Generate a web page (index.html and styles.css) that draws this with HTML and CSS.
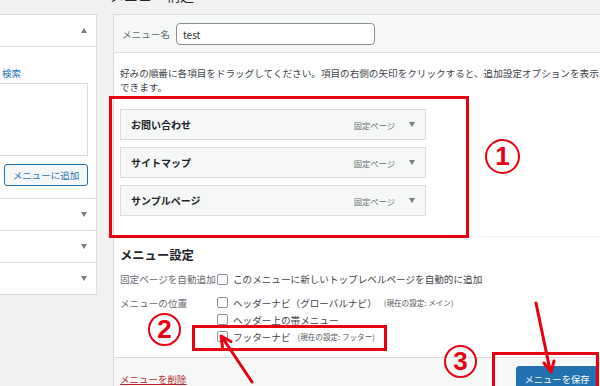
FILE: index.html
```html
<!DOCTYPE html>
<html lang="ja">
<head>
  <meta charset="utf-8">
  <title>メニュー構造</title>
  <link rel="stylesheet" href="styles.css">
</head>
<body>
  <div class="page">
    <div class="side">
      <div class="box">
        <div class="box-head"><span class="tri up"></span></div>
        <div class="box-body">
          <div class="tabs"><a href="#">検索</a></div>
          <div class="list"></div>
          <div class="add-row"><button type="button" class="btn">メニューに追加</button></div>
        </div>
        <div class="acc-row"><span class="tri"></span></div>
        <div class="acc-row"><span class="tri"></span></div>
        <div class="acc-row"><span class="tri"></span></div>
      </div>
    </div>

    <div class="main">
      <h2 class="title">メニュー構造</h2>
      <div class="menu-box">
        <div class="menu-head">
          <label for="menuName">メニュー名</label>
          <input type="text" id="menuName" value="test">
        </div>
        <div class="menu-body">
          <div class="structure">
            <p class="desc">好みの順番に各項目をドラッグしてください。項目の右側の矢印をクリックすると、追加設定オプションを表示<br>できます。</p>
            <ul class="items">
              <li class="item"><span class="item-title">お問い合わせ</span><span class="item-type">固定ページ</span><span class="tri"></span></li>
              <li class="item"><span class="item-title">サイトマップ</span><span class="item-type">固定ページ</span><span class="tri"></span></li>
              <li class="item"><span class="item-title">サンプルページ</span><span class="item-type">固定ページ</span><span class="tri"></span></li>
            </ul>
          </div>
          <div class="settings">
            <h3>メニュー設定</h3>
            <div class="set-row">
              <div class="set-label">固定ページを自動追加</div>
              <div class="set-opts">
                <label class="opt"><input type="checkbox">このメニューに新しいトップレベルページを自動的に追加</label>
              </div>
            </div>
            <div class="set-row loc">
              <div class="set-label">メニューの位置</div>
              <div class="set-opts">
                <label class="opt"><input type="checkbox">ヘッダーナビ（グローバルナビ）<span class="note">(現在の設定: メイン)</span></label>
                <label class="opt"><input type="checkbox">ヘッダー上の帯メニュー</label>
                <label class="opt"><input type="checkbox">フッターナビ<span class="note">(現在の設定: フッター)</span></label>
              </div>
            </div>
          </div>
        </div>
        <div class="menu-foot">
          <a href="#" class="delete">メニューを削除</a>
          <button type="button" class="btn-primary">メニューを保存</button>
        </div>
      </div>
    </div>
  </div>

  <!-- annotations -->
  <div class="mark box1"></div>
  <div class="mark box2"></div>
  <div class="mark box3"></div>
  <div class="num n1">1</div>
  <div class="num n2">2</div>
  <div class="num n3">3</div>
  <svg class="arrows" width="600" height="386" viewBox="0 0 600 386">
    <g fill="none" stroke="#e60012" stroke-width="3" stroke-linecap="round" stroke-linejoin="round">
      <line x1="252" y1="382" x2="222" y2="337"/>
      <polyline points="231,341.5 221,336 222.5,347"/>
      <line x1="536" y1="303" x2="550" y2="370"/>
      <polyline points="554,361 551,372 544,363"/>
    </g>
  </svg>
</body>
</html>
```

FILE: styles.css
```css
body {
  margin: 0;
  background: #f1f1f1;
  font-family: "Noto Sans CJK JP", sans-serif;
  color: #3c434a;
  overflow: hidden;
  width: 600px;
  height: 386px;
}

.page {
  display: flex;
  align-items: flex-start;
}

.side {
  flex-shrink: 0;
  width: 97px;
  margin-top: 14px;
}

.box {
  width: 110px;
  margin-left: -13px;
  background: #fff;
  border: 1px solid #dcdcde;
  box-sizing: border-box;
}

.box-head {
  height: 31px;
  border-bottom: 1px solid #dcdcde;
  display: flex;
  align-items: center;
  justify-content: flex-end;
  padding-right: 9px;
}

.box-body {
  padding: 19px 8px 12px 12px;
}

.tabs {
  font-size: 9.5px;
  line-height: 14px;
  padding-left: 2px;
}

.tabs a {
  color: #2271b1;
  text-decoration: none;
}

.list {
  height: 71px;
  margin-top: 3px;
  margin-left: -2px;
  border: 1px solid #dcdcde;
}

.add-row {
  display: flex;
  justify-content: flex-end;
  margin-top: 8px;
}

.btn {
  height: 22px;
  width: 84px;
  padding: 0;
  font-family: inherit;
  font-size: 9.5px;
  color: #2271b1;
  background: #f6f7f7;
  border: 1px solid #2271b1;
  border-radius: 3px;
}

.acc-row {
  height: 31px;
  border-top: 1px solid #dcdcde;
  display: flex;
  align-items: center;
  justify-content: flex-end;
  padding-right: 9px;
}

.tri {
  width: 0;
  height: 0;
  border-left: 3.5px solid transparent;
  border-right: 3.5px solid transparent;
  border-top: 5px solid #787c82;
}

.tri.up {
  border-top: none;
  border-bottom: 5px solid #787c82;
}

.main {
  flex-shrink: 0;
  width: 497px;
  margin-left: 16px;
}

.title {
  margin: -12px 0 12px -3px;
  font-size: 14px;
  line-height: 14px;
  font-weight: normal;
  color: #1d2327;
}

.menu-box {
  background: #fff;
  border: 1px solid #dcdcde;
}

.menu-head {
  display: flex;
  align-items: center;
  gap: 6px;
  padding: 8px 8px 7px;
  background: #f6f7f7;
  border-bottom: 1px solid #dcdcde;
}

.menu-head label {
  width: 48px;
  font-size: 9.6px;
  color: #646970;
}

.menu-head input {
  width: 199px;
  height: 22px;
  box-sizing: border-box;
  margin: 0;
  padding: 0 6px;
  font-family: inherit;
  font-size: 10px;
  color: #2c3338;
  border: 1px solid #8c8f94;
  border-radius: 4px;
}

.structure {
  padding: 13px 6px 20px;
}

.desc {
  margin: 0;
  font-size: 9.6px;
  line-height: 14px;
  white-space: nowrap;
}

.items {
  list-style: none;
  margin: 15px 0 0;
  padding: 0;
  width: 306px;
  display: flex;
  flex-direction: column;
  gap: 7px;
}

.item {
  height: 29px;
  display: flex;
  align-items: center;
  padding: 0 10px;
  background: #f6f7f7;
  border: 1px solid #dcdcde;
}

.item-title {
  flex: 1;
  font-size: 10px;
  font-weight: bold;
  color: #1d2327;
}

.item-type {
  font-size: 8.3px;
  color: #646970;
  margin-right: 14px;
}

.settings {
  border-top: 1px solid #f0f0f1;
  padding: 10px 6px 12px;
}

.settings h3 {
  margin: 0 0 9px;
  font-size: 12.3px;
  line-height: 16px;
  font-weight: bold;
  color: #1d2327;
}

.set-row {
  display: grid;
  grid-template-columns: 97px 1fr;
  font-size: 9.6px;
}

.set-row.loc {
  margin-top: 8px;
}

.set-label {
  line-height: 14px;
  color: #646970;
  white-space: nowrap;
}

.loc .set-label {
  margin-top: 2px;
}

.set-opts {
  display: flex;
  flex-direction: column;
}

.opt {
  display: flex;
  align-items: center;
  gap: 5px;
  line-height: 14px;
  white-space: nowrap;
}

.loc .opt {
  height: 17px;
}

.opt input {
  appearance: none;
  margin: 0;
  width: 11px;
  height: 11px;
  border: 1px solid #8c8f94;
  border-radius: 2px;
  background: #fff;
  flex-shrink: 0;
}

.note {
  font-size: 7.6px;
  color: #50575e;
  margin-left: 2px;
}

.menu-foot {
  display: flex;
  align-items: center;
  justify-content: space-between;
  padding: 8px 11px 8px 6px;
  background: #f6f7f7;
  border-top: 1px solid #dcdcde;
}

.delete {
  font-size: 9.5px;
  color: #b32d2e;
  text-decoration: underline;
}

.btn-primary {
  height: 25px;
  width: 82px;
  padding: 0;
  font-family: inherit;
  font-size: 9.3px;
  color: #fff;
  background: #2271b1;
  border: 1px solid #2271b1;
  border-radius: 3px;
}

.mark {
  position: absolute;
  border: 3px solid #e60012;
  box-sizing: border-box;
}

.box1 {
  left: 109px;
  top: 96px;
  width: 360px;
  height: 142px;
}

.box2 {
  left: 192px;
  top: 325px;
  width: 195px;
  height: 26px;
}

.box3 {
  left: 492px;
  top: 352px;
  width: 107px;
  height: 50px;
}

.num {
  position: absolute;
  width: 33px;
  height: 33px;
  box-sizing: border-box;
  border: 2px solid #e60012;
  border-radius: 50%;
  color: #e60012;
  font-family: "Liberation Sans", sans-serif;
  font-weight: bold;
  font-size: 26px;
  line-height: 29px;
  text-align: center;
}

.n1 {
  left: 485px;
  top: 139px;
  width: 35px;
  height: 35px;
  line-height: 31px;
}

.n2 {
  left: 148px;
  top: 313px;
}

.n3 {
  left: 444px;
  top: 345px;
}

.arrows {
  position: absolute;
  left: 0;
  top: 0;
  pointer-events: none;
}
```
